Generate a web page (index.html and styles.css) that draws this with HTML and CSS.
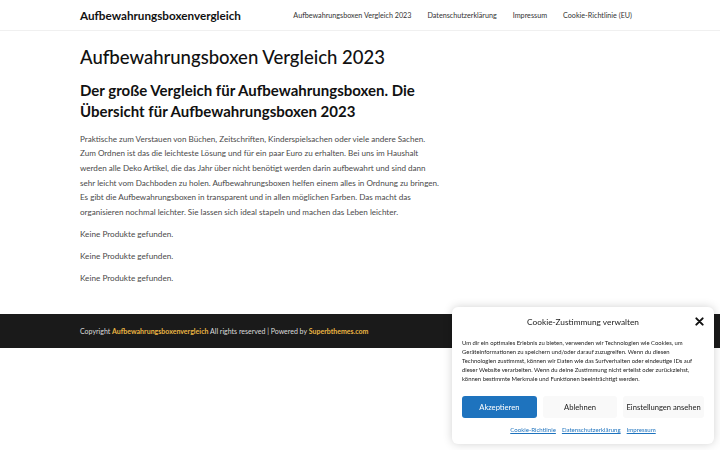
FILE: index.html
```html
<!DOCTYPE html>
<html lang="de">
<head>
<meta charset="utf-8">
<title>Aufbewahrungsboxen Vergleich 2023</title>
<link rel="stylesheet" href="styles.css">
</head>
<body>
<header class="site-header">
  <div class="container header-inner">
    <a class="site-title" href="#">Aufbewahrungsboxenvergleich</a>
    <nav class="main-nav">
      <a href="#">Aufbewahrungsboxen Vergleich 2023</a>
      <a href="#">Datenschutzerklärung</a>
      <a href="#">Impressum</a>
      <a href="#">Cookie-Richtlinie (EU)</a>
    </nav>
  </div>
</header>
<main class="container content">
  <h1 class="page-title">Aufbewahrungsboxen Vergleich 2023</h1>
  <h2 class="subtitle">Der große Vergleich für Aufbewahrungsboxen. Die Übersicht für Aufbewahrungsboxen 2023</h2>
  <p class="intro">Praktische zum Verstauen von Büchen, Zeitschriften, Kinderspielsachen oder viele andere Sachen. Zum Ordnen ist das die leichteste Lösung und für ein paar Euro zu erhalten. Bei uns im Haushalt werden alle Deko Artikel, die das Jahr über nicht benötigt werden darin aufbewahrt und sind dann sehr leicht vom Dachboden zu holen. Aufbewahrungsboxen helfen einem alles in Ordnung zu bringen. Es gibt die Aufbewahrungsboxen in transparent und in allen möglichen Farben. Das macht das organisieren nochmal leichter. Sie lassen sich ideal stapeln und machen das Leben leichter.</p>
  <p class="note">Keine Produkte gefunden.</p>
  <p class="note">Keine Produkte gefunden.</p>
  <p class="note">Keine Produkte gefunden.</p>
</main>
<footer class="site-footer">
  <div class="container footer-inner">
    <span class="footer-text">Copyright <a href="#">Aufbewahrungsboxenvergleich</a> All rights reserved | Powered by <a href="#">Superbthemes.com</a></span>
  </div>
</footer>
<div class="cookie-box">
  <div class="cookie-head">
    <span class="cookie-title">Cookie-Zustimmung verwalten</span>
    <span class="cookie-close">
      <svg width="9" height="9" viewBox="0 0 10 10"><path d="M1.5 1.5L8.5 8.5M8.5 1.5L1.5 8.5" stroke="#111" stroke-width="2.2" stroke-linecap="round"/></svg>
    </span>
  </div>
  <p class="cookie-text">Um dir ein optimales Erlebnis zu bieten, verwenden wir Technologien wie Cookies, um Geräteinformationen zu speichern und/oder darauf zuzugreifen. Wenn du diesen Technologien zustimmst, können wir Daten wie das Surfverhalten oder eindeutige IDs auf dieser Website verarbeiten. Wenn du deine Zustimmung nicht erteilst oder zurückziehst, können bestimmte Merkmale und Funktionen beeinträchtigt werden.</p>
  <div class="cookie-buttons">
    <button class="btn btn-accept">Akzeptieren</button>
    <button class="btn btn-plain">Ablehnen</button>
    <button class="btn btn-plain">Einstellungen ansehen</button>
  </div>
  <div class="cookie-links">
    <a href="#">Cookie-Richtlinie</a>
    <a href="#">Datenschutzerklärung</a>
    <a href="#">Impressum</a>
  </div>
</div>
</body>
</html>
```
FILE: styles.css
```css
* { box-sizing: border-box; }
html, body { margin: 0; padding: 0; background: #fff; }
body { font-family: Lato, "Liberation Sans", sans-serif; color: #222; }
a { text-decoration: none; color: inherit; }

.container { width: 560px; margin: 0 auto; }

.site-header { border-bottom: 1px solid #f0f0f0; height: 31px; }
.header-inner { display: flex; align-items: center; justify-content: space-between; height: 30px; }
.site-title { font-weight: 700; font-size: 11.7px; color: #111; }
.main-nav { display: flex; gap: 16px; font-size: 7.2px; color: #333; margin-right: 8px; }

.content { padding-top: 14px; padding-bottom: 21px; }
.page-title { font-size: 18.5px; font-weight: 500; margin: 0 0 9px; color: #111; line-height: 1.4; }
.subtitle { font-size: 15px; font-weight: 700; margin: 0 0 10px; color: #111; line-height: 1.4; width: 370px; }
.intro { font-size: 8.1px; line-height: 14.6px; color: #4a4a4a; margin: 0 0 7.5px; width: 359.5px; }
.note { font-size: 8.2px; line-height: 14.6px; color: #4a4a4a; margin: 0 0 7.5px; }

.site-footer { background: #1a1a1a; height: 34px; }
.footer-inner { height: 34px; display: flex; align-items: center; }
.footer-text { font-size: 7px; color: #ddd; }
.footer-text a { color: #eab543; font-weight: 700; }

.cookie-box { position: fixed; left: 452px; top: 307px; width: 262px; height: 137px; background: #fff; border-radius: 6px; box-shadow: 0 0 10px rgba(0,0,0,0.18); padding: 5px 10px 0; }
.cookie-head { position: relative; text-align: center; height: 14px; line-height: 14px; }
.cookie-title { font-size: 8.3px; color: #222; }
.cookie-close { position: absolute; right: 0; top: 5px; line-height: 0; }
.cookie-text { font-size: 5.9px; line-height: 9px; color: #222; margin: 12px 0 0; }
.cookie-buttons { display: flex; gap: 6px; margin-top: 13px; }
.btn { font-family: Lato, sans-serif; font-size: 7.6px; height: 22px; border: 0; border-radius: 3px; padding: 0; }
.btn-accept { width: 75px; background: #1e73be; color: #fff; }
.btn-plain { background: #f9f9f9; color: #222; }
.btn-plain:nth-child(2) { width: 75px; }
.btn-plain:nth-child(3) { width: 81px; }
.cookie-links { display: flex; justify-content: center; gap: 6px; margin-top: 8px; font-size: 6.1px; }
.cookie-links a { color: #1e73be; text-decoration: underline; }
```
